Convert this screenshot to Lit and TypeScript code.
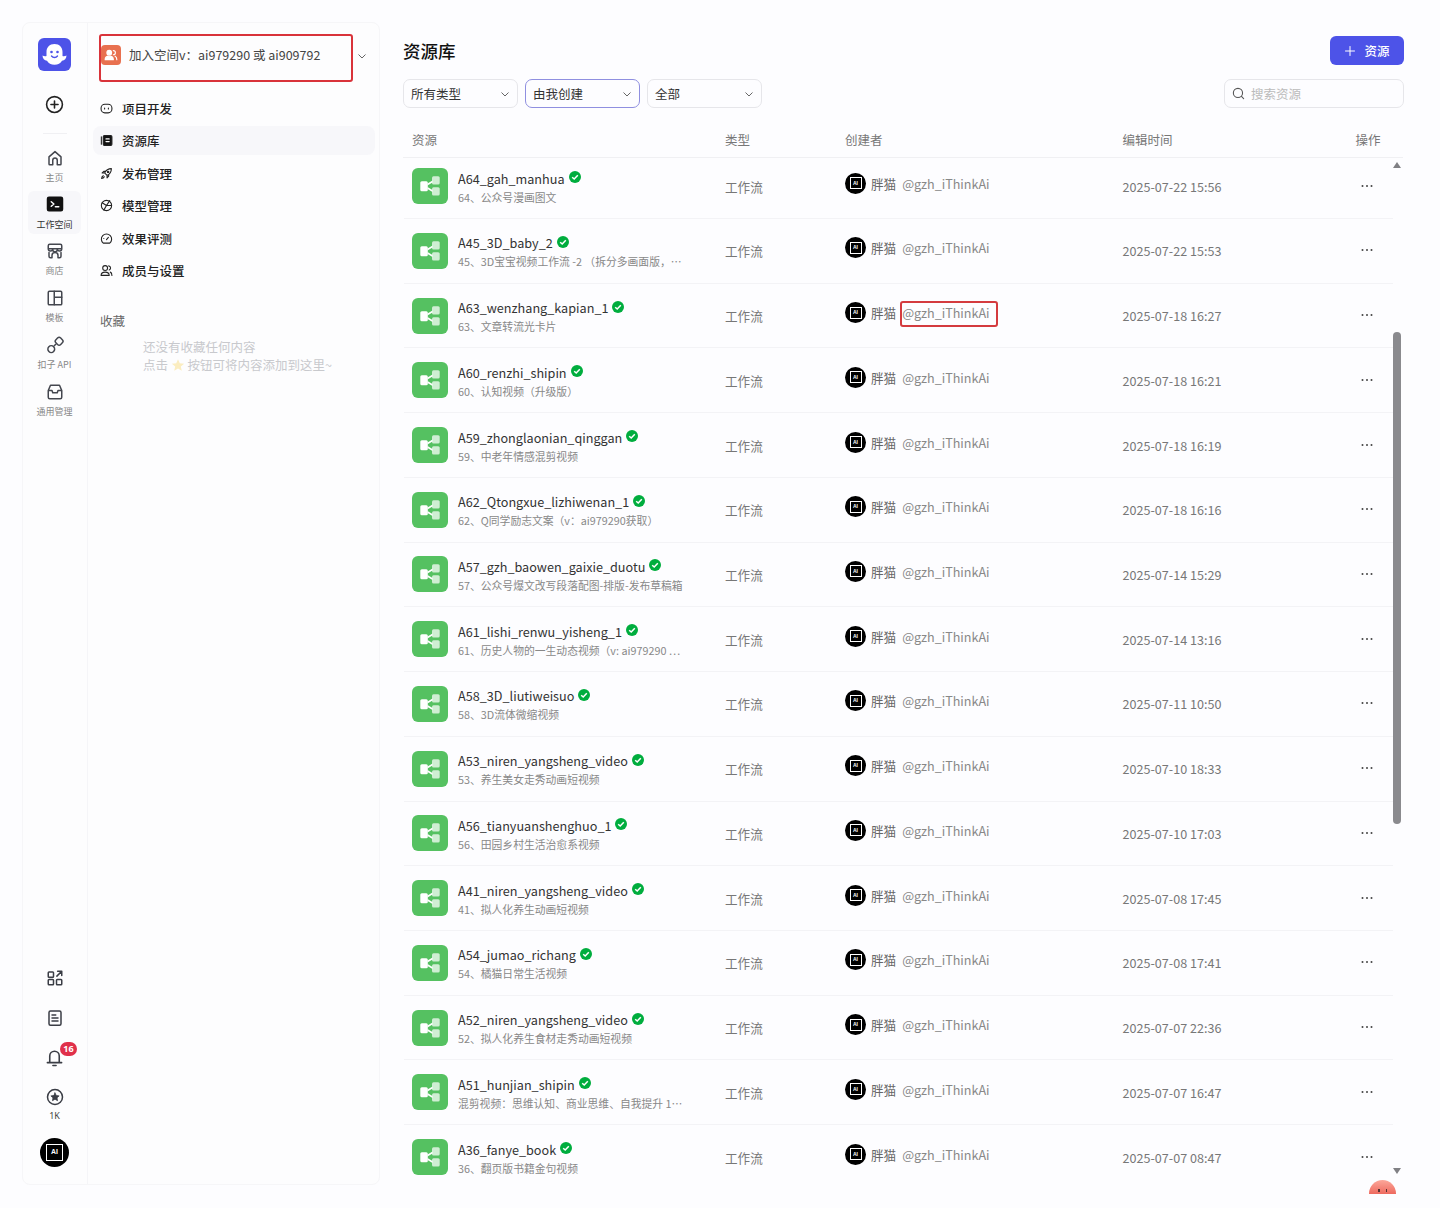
import { LitElement, html, css, svg } from "lit";
import { customElement } from "lit/decorators.js";

const rows = [
  ["A64_gah_manhua", "64、公众号漫画图文", "2025-07-22 15:56"],
  ["A45_3D_baby_2", "45、3D宝宝视频工作流 -2 （拆分多画面版，⋯", "2025-07-22 15:53"],
  ["A63_wenzhang_kapian_1", "63、文章转流光卡片", "2025-07-18 16:27"],
  ["A60_renzhi_shipin", "60、认知视频（升级版）", "2025-07-18 16:21"],
  ["A59_zhonglaonian_qinggan", "59、中老年情感混剪视频", "2025-07-18 16:19"],
  ["A62_Qtongxue_lizhiwenan_1", "62、Q同学励志文案（v：ai979290获取）", "2025-07-18 16:16"],
  ["A57_gzh_baowen_gaixie_duotu", "57、公众号爆文改写段落配图-排版-发布草稿箱", "2025-07-14 15:29"],
  ["A61_lishi_renwu_yisheng_1", "61、历史人物的一生动态视频（v: ai979290 ⋯", "2025-07-14 13:16"],
  ["A58_3D_liutiweisuo", "58、3D流体微缩视频", "2025-07-11 10:50"],
  ["A53_niren_yangsheng_video", "53、养生美女走秀动画短视频", "2025-07-10 18:33"],
  ["A56_tianyuanshenghuo_1", "56、田园乡村生活治愈系视频", "2025-07-10 17:03"],
  ["A41_niren_yangsheng_video", "41、拟人化养生动画短视频", "2025-07-08 17:45"],
  ["A54_jumao_richang", "54、橘猫日常生活视频", "2025-07-08 17:41"],
  ["A52_niren_yangsheng_video", "52、拟人化养生食材走秀动画短视频", "2025-07-07 22:36"],
  ["A51_hunjian_shipin", "混剪视频：思维认知、商业思维、自我提升 1⋯", "2025-07-07 16:47"],
  ["A36_fanye_book", "36、翻页版书籍金句视频", "2025-07-07 08:47"],
];

const ic = (size: number, body: unknown) => html`<svg width=${size} height=${size} viewBox="0 0 24 24" fill="none" stroke="currentColor" stroke-width="2" stroke-linecap="round" stroke-linejoin="round">${body}</svg>`;

const railTop = [
  ["主页", svg`<path d="M4 10.500 12 3.500l8 7V20a1 1 0 0 1-1 1h-4v-6a3 3 0 0 0-6 0v6H5a1 1 0 0 1-1-1z"/>`, false],
  ["工作空间", svg`<rect x="2" y="3" width="20" height="18" rx="2" fill="#111" stroke="#111"/><path d="m7 9 3.500 3L7 15M12.500 15.500H17" stroke="#fff"/>`, true],
  ["商店", svg`<path d="M5 3h14a2 2 0 0 1 2 2v4a3 3 0 0 1-3 3 3 3 0 0 1-3-2 3 3 0 0 1-6 0 3 3 0 0 1-3 2 3 3 0 0 1-3-3V5a2 2 0 0 1 2-2zM3 9h18M4 14v5a2 2 0 0 0 2 2h2v-3a4 4 0 0 1 8 0v3h2a2 2 0 0 0 2-2v-5"/>`, false],
  ["模板", svg`<rect x="3" y="3" width="18" height="18" rx="1.500"/><path d="M11 3v18M11 11h10"/>`, false],
  ["扣子 API", svg`<rect x="2.500" y="13" width="9" height="9" rx="4.500" transform="rotate(-45 7 17.500)"/><rect x="13" y="2.500" width="9" height="9" rx="3" transform="rotate(-45 17.500 7)"/><path d="m11 13 2-2"/>`, false],
  ["通用管理", svg`<path d="M6 3h12l3 7v9a2 2 0 0 1-2 2H5a2 2 0 0 1-2-2v-9zM3 10h5l1 3h6l1-3h5"/>`, false],
] as const;

const menu = [
  ["项目开发", svg`<rect x="2" y="4" width="20" height="16" rx="7"/><path d="M8.500 11v2M15.500 11v2"/>`, false],
  ["资源库", svg`<path d="M2.500 5v14" /><rect x="6" y="3" width="16" height="18" rx="2" fill="#111"/><path d="M11 9h6M11 14h6" stroke="#fff"/>`, true],
  ["发布管理", svg`<path d="M21 3c-6 0-10 3-12.500 8l4.500 4.500C18 13 21 9 21 3zM8.500 11H4l3-3h3M13 15.500V20l3-3v-3M6 16c-2 1-3 3-3 5 2 0 4-1 5-3"/><circle cx="15" cy="9" r="1.300"/>`, false],
  ["模型管理", svg`<circle cx="12" cy="12" r="9.500"/><path d="m4 7 8 5 6-9M12 12l-5 8.500M12 12h9"/>`, false],
  ["效果评测", svg`<path d="M6 20.500a9.500 9.500 0 1 1 12 0z"/><path d="m12 14 3.500-4M7 12h.1"/>`, false],
  ["成员与设置", svg`<circle cx="9.500" cy="7.500" r="4.500"/><path d="M2 21c0-4 3-6 7.500-6s7.500 2 7.500 6zM16 3.500c2.500.5 3.500 2 3.500 4s-1 3-2.500 3.500M19 15c2 .8 3 2.500 3 6"/>`, false],
] as const;

const aiAvatar = (size: number) => html`<span class="avatar" style="width:${size}px;height:${size}px">
  <span class="avatar-box" style="width:${Math.round(size * 0.58)}px;height:${Math.round(size * 0.58)}px;font-size:${Math.max(5, size * 0.24)}px">AI</span>
</span>`;

const workflowIcon = html`<span class="wf"><svg width="36" height="36" viewBox="0 0 36 36" fill="#fff">
  <rect x="8.300" y="13.300" width="7.500" height="10" rx="1.500"/>
  <rect x="20" y="8.300" width="7.700" height="8.300" rx="1.500" fill-opacity=".72"/>
  <rect x="20" y="19.300" width="7.700" height="8.300" rx="1.500" fill-opacity=".72"/>
  <path d="M15.500 15.500 20.500 12.500V14.500L15.500 17.500zM15.500 19 20.500 22V24L15.500 21z"/></svg></span>`;

const check = html`<svg class="check" width="12" height="12" viewBox="0 0 12 12"><circle cx="6" cy="6" r="6" fill="#00ad3e"/><path d="M3.200 6.200 5.200 8 8.800 4.200" fill="none" stroke="#fff" stroke-width="1.500"/></svg>`;
const chevron = html`<svg class="chev" width="10" height="10" viewBox="0 0 10 10" fill="none" stroke="#666" stroke-width="1"><path d="M1.500 3.500 5 7l3.500-3.500"/></svg>`;

@customElement("app-root")
export class AppRoot extends LitElement {
  static styles = css`
    :host { display: block; width: 1440px; height: 1208px; overflow: hidden; background: #fdfdff; font-family: "Noto Sans CJK SC", "Noto Sans", sans-serif; color: #1c1f23; }
    * { box-sizing: border-box; }
    svg { display: block; flex: none; }
    .page { display: flex; padding: 22px 0 0 22px; height: 1208px; align-items: flex-start; }
    .side { display: flex; width: 358px; height: 1163px; background: #fdfdfe; border: 1px solid #f6f6f8; border-radius: 8px; flex: none; }
    .rail { width: 65px; flex: none; border-right: 1px solid #f5f5f8; display: flex; flex-direction: column; align-items: center; padding: 15px 1px 0 0; color: #3a3d45; }
    .logo { width: 33px; height: 33px; border-radius: 6px; background: #4d53e8; display: flex; align-items: center; justify-content: center; }
    .plus { margin-top: 24px; color: #222; }
    .rail-div { width: 24px; height: 1px; background: #f0f0f3; margin: 19px 0 10px; }
    .rail-item { width: 53px; height: 47px; display: flex; flex-direction: column; align-items: center; padding-top: 5px; font-size: 9px; line-height: 13px; color: #888; gap: 3.500px; border-radius: 6px; flex: none; }
    .rail-item svg { color: #44474f; }
    .rail-item.on { background: #f7f7fa; color: #333; height: 43px; margin-bottom: 3px; padding-top: 4px; gap: 4.500px; }
    .spacer { flex: 1; }
    .rail-b { height: 39.500px; display: flex; flex-direction: column; align-items: center; position: relative; color: #3a3d45; flex: none; }
    .badge { position: absolute; top: -6px; left: 15px; min-width: 17px; height: 14px; border-radius: 8px; background: #e0304a; color: #fff; font-size: 9px; font-weight: 700; line-height: 14px; text-align: center; font-family: "Noto Sans", sans-serif; }
    .k { font-size: 9px; line-height: 12px; color: #444; margin-top: 4px; font-family: "Noto Sans", sans-serif; }
    .rail .avatar { margin: 11px 0 17px; }
    .avatar { border-radius: 50%; background: #000; display: flex; align-items: center; justify-content: center; flex: none; }
    .avatar-box { border: 1.200px solid #fff; color: #fff; font-weight: 700; display: flex; align-items: center; justify-content: center; line-height: 1; font-family: "Liberation Sans", sans-serif; }
    .panel { flex: 1; padding: 11px 4px 0 5px; min-width: 0; }
    .space { display: flex; align-items: center; gap: 4px; }
    .space .chev { margin-bottom: 5px; }
    .space-box { width: 254px; height: 48px; margin-left: 6px; border: 2px solid #d9333a; border-radius: 3px; padding: 0 0 7px 0; display: flex; align-items: center; gap: 8px; font-size: 12.500px; color: #444; }
    .space-ic { width: 20px; height: 20px; border-radius: 4px; background: #e8704f; display: flex; align-items: center; justify-content: center; color: #fff; flex: none; }
    .menu { margin-top: 10.500px; display: flex; flex-direction: column; }
    .mi { height: 32.400px; display: flex; align-items: center; gap: 9px; padding-left: 7px; font-size: 12.500px; font-weight: 500; color: #222; border-radius: 8px; }
    .mi.on { background: #f7f7fa; height: 29px; margin: 1.200px 0 2.200px; }
    .fav { font-size: 12.500px; color: #666; margin: 25.500px 0 0 7px; line-height: 18px; }
    .empty { margin: 8px 0 0 50px; font-size: 12.500px; line-height: 18px; color: #c8c9cd; }
    .star { display: inline-block; vertical-align: -2px; }
    .main { width: 1001px; height: 1172px; margin-left: 23px; flex: none; overflow: hidden; position: relative; padding-top: 14px; }
    .head { display: flex; justify-content: space-between; align-items: center; height: 29px; }
    h1 { margin: 0; font-size: 17.500px; font-weight: 500; color: #111; line-height: 29px; }
    .add { width: 74px; height: 29px; border-radius: 6px; background: #4d53e8; color: #fff; display: flex; align-items: center; justify-content: center; gap: 8px; font-size: 12.500px; font-weight: 500; }
    .filters { display: flex; gap: 7px; margin-top: 14px; height: 29px; }
    .sel { width: 115px; height: 29px; border: 1px solid #e6e6ea; border-radius: 7px; display: flex; align-items: center; justify-content: space-between; padding: 0 7px; font-size: 12.500px; color: #333; }
    .sel.on { border-color: #8f8fe0; }
    .search { margin-left: auto; width: 180px; height: 29px; border: 1px solid #e6e6ea; border-radius: 7px; display: flex; align-items: center; gap: 6px; padding-left: 7px; font-size: 12.500px; color: #bbb; }
    .search svg { color: #555; }
    .grid { display: grid; grid-template-columns: 313px 120px 277.500px 234px 36px; padding-left: 8px; }
    .thead { margin-top: 17px; height: 32.500px; width: 1000px; border-bottom: 1px solid #f0f0f3; align-items: center; font-size: 12.500px; color: #777; padding: 0 0 3px 9px; }
    .thead span:last-child { margin-left: -1px; }
    .body { display: flex; height: 1040px; }
    .list { width: 989px; flex: none; overflow: hidden; margin-left: 1px; }
    .row { height: 64.730px; border-bottom: 1px solid #f3f3f6; align-items: center; font-size: 12.600px; }
    .row:first-child { margin-top: -3.200px; }
    .row:last-child { border-bottom: 0; }
    .res { display: flex; align-items: center; gap: 10px; min-width: 0; }
    .wf { width: 36px; height: 36px; border-radius: 6px; background: #55c161; display: flex; align-items: center; justify-content: center; flex: none; }
    .txt { padding-top: 3px; }
    .nm { display: flex; align-items: center; gap: 4px; font-size: 12.650px; line-height: 18px; color: #333; margin-top: -1px; }
    .check { margin-top: -3px; }
    .ds { font-size: 10.800px; line-height: 16px; color: #888; margin-top: 1px; white-space: nowrap; }
    .ty { color: #777; }
    .cr { display: flex; align-items: center; gap: 5px; padding-bottom: 6px; }
    .cn { color: #666; }
    .hd { color: #888; margin-left: 1px; position: relative; }
    .hd.box::after { content: ""; position: absolute; left: -2px; top: -2px; width: 94px; height: 22px; border: 2px solid #d43b3f; border-radius: 3px; }
    .tm { color: #777; }
    .dots { padding: 0 0 1px 4.500px; color: #444; }
    .bar { width: 10px; flex: none; display: flex; flex-direction: column; align-items: center; padding-top: 4px; margin-left: -1px; }
    .up { width: 0; height: 0; border: 4.500px solid transparent; border-top: 0; border-bottom: 6px solid #808084; }
    .thumb { width: 8px; height: 492px; border-radius: 4px; background: #8a8a8e; margin: 164px 0 344px; }
    .down { width: 0; height: 0; border: 4.500px solid transparent; border-bottom: 0; border-top: 6px solid #808084; }
    .mascot { position: absolute; left: 966px; bottom: 0; width: 27px; height: 14px; border-radius: 14px 14px 0 0; background: linear-gradient(#fca79a, #ee6a5f); display: flex; justify-content: center; gap: 6px; padding-top: 9px; }
    .mascot i { width: 1.500px; height: 3px; background: #533; }
  `;

  render() {
    return html`<div class="page">
      <aside class="side">
        <nav class="rail">
          <div class="logo"><svg width="27" height="27" viewBox="0 0 27 27"><path d="M13.500 3c5 0 8 3.500 8 8v4c1.500.5 3 0 4-.5 0 3-2 5-4.500 5.200-1.500 2.500-4 4-7.500 4s-6-1.500-7.500-4C3.500 19.500 1.500 17.500 1.500 14.500c1 .5 2.500 1 4 .5v-4c0-4.500 3-8 8-8z" fill="#fff"/><circle cx="10.500" cy="11" r="1.300" fill="#4d53e8"/><circle cx="16.500" cy="11" r="1.300" fill="#4d53e8"/><path d="M10.500 15c1.500 2 4.500 2 6 0" stroke="#4d53e8" stroke-width="1.300" fill="none" stroke-linecap="round"/></svg></div>
          <div class="plus">${ic(19, svg`<circle cx="12" cy="12" r="10"/><path d="M12 7.500v9M7.500 12h9"/>`)}</div>
          <div class="rail-div"></div>
          ${railTop.map(([t, b, on]) => html`<div class="rail-item ${on ? "on" : ""}">${ic(18, b)}<span>${t}</span></div>`)}
          <div class="spacer"></div>
          <div class="rail-b">${ic(18, svg`<rect x="3" y="4" width="7" height="7" rx="1"/><rect x="3" y="14" width="7" height="7" rx="1"/><rect x="14" y="14" width="7" height="7" rx="1"/><path d="M14.500 9.500 21 3M15.500 3H21v5.500"/>`)}</div>
          <div class="rail-b">${ic(18, svg`<rect x="4" y="2.500" width="16" height="19" rx="2"/><path d="M8 8h5M8 12h8M8 16h8"/>`)}</div>
          <div class="rail-b">${ic(19, svg`<path d="M3 18.500h18M6 18.500V10a6 6 0 0 1 12 0v8.500M10 22h4"/>`)}<span class="badge">16</span></div>
          <div class="rail-b">${ic(18, svg`<circle cx="12" cy="12" r="10"/><path d="m12 6.500 1.700 3.500 3.800.5-2.800 2.600.7 3.800-3.400-1.900-3.400 1.900.7-3.800-2.800-2.600 3.800-.5z" fill="currentColor" stroke-width="1"/>`)}<span class="k">1K</span></div>
          ${aiAvatar(29)}
        </nav>
        <section class="panel">
          <div class="space">
            <div class="space-box"><span class="space-ic">${ic(14, svg`<circle cx="9" cy="8" r="4" fill="currentColor"/><path d="M2 20c0-4 3-6 7-6s7 2 7 6z" fill="currentColor"/><path d="M16 4.500a3.500 3.500 0 0 1 0 7M19 14c2 1 3 3 3 6"/>`)}</span><span>加入空间v：ai979290 或 ai909792</span></div>
            ${chevron}
          </div>
          <div class="menu">
            ${menu.map(([t, b, on]) => html`<div class="mi ${on ? "on" : ""}">${ic(13, b)}<span>${t}</span></div>`)}
          </div>
          <div class="fav">收藏</div>
          <div class="empty">还没有收藏任何内容<br />点击 <svg class="star" width="14" height="14" viewBox="0 0 24 24"><path d="m12 2 3 7 7.500.7-5.700 5 1.700 7.300-6.500-3.900L5.500 22l1.700-7.300-5.700-5L9 9z" fill="#fbedc0"/></svg> 按钮可将内容添加到这里~</div>
        </section>
      </aside>
      <main class="main">
        <div class="head">
          <h1>资源库</h1>
          <div class="add">${ic(12, svg`<path d="M12 3v18M3 12h18"/>`)}<span>资源</span></div>
        </div>
        <div class="filters">
          <div class="sel"><span>所有类型</span>${chevron}</div>
          <div class="sel on"><span>由我创建</span>${chevron}</div>
          <div class="sel"><span>全部</span>${chevron}</div>
          <div class="search">${ic(13, svg`<circle cx="11" cy="11" r="8.500"/><path d="m17.500 17.500 4 4"/>`)}<span>搜索资源</span></div>
        </div>
        <div class="grid thead"><span>资源</span><span>类型</span><span>创建者</span><span>编辑时间</span><span>操作</span></div>
        <div class="body">
          <div class="list">
            ${rows.map(([n, d, t], i) => html`<div class="grid row">
              <div class="res">${workflowIcon}<div class="txt"><div class="nm"><span>${n}</span>${check}</div><div class="ds">${d}</div></div></div>
              <div class="ty">工作流</div>
              <div class="cr">${aiAvatar(21)}<span class="cn">胖猫</span><span class="hd ${i === 2 ? "box" : ""}">@gzh_iThinkAi</span></div>
              <div class="tm">${t}</div>
              <div class="dots"><svg width="12" height="4" viewBox="0 0 12 4" fill="currentColor"><circle cx="1.500" cy="2" r="1"/><circle cx="6" cy="2" r="1"/><circle cx="10.500" cy="2" r="1"/></svg></div>
            </div>`)}
          </div>
          <div class="bar"><div class="up"></div><div class="thumb"></div><div class="down"></div></div>
        </div>
        <div class="mascot"><i></i><i></i></div>
      </main>
    </div>`;
  }
}
